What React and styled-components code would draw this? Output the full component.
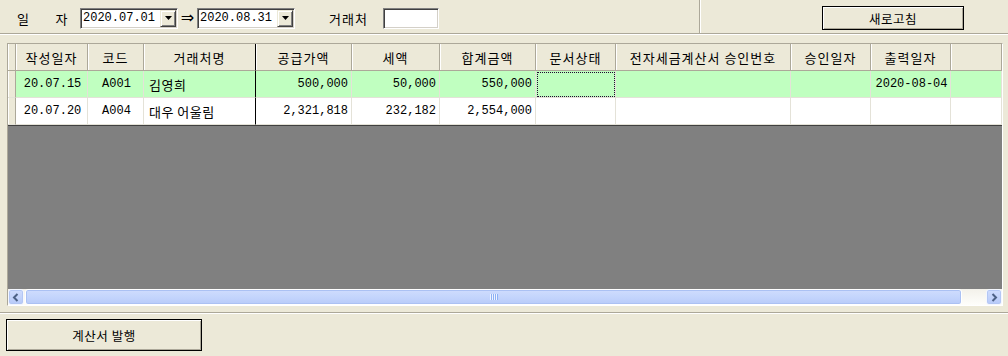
import React from 'react';
import styled, { createGlobalStyle, css } from 'styled-components';

const KO = `"Noto Sans CJK KR", "Noto Sans", sans-serif`;
const MONO = `"Liberation Mono", "DejaVu Sans Mono", "Noto Sans CJK KR", monospace`;

const colors = {
  face: '#ECE9D8',
  shadow: '#ACA899',
  dark: '#404040',
  canvas: '#808080',
  gridLine: '#E4E2D8',
  selected: '#C0FFC0',
};

const GlobalStyle = createGlobalStyle`
  * { box-sizing: border-box; }
  html, body { margin: 0; padding: 0; background: ${colors.face}; }
  body {
    width: 1008px;
    height: 356px;
    overflow: hidden;
    font-family: ${KO};
    font-size: 13px;
    color: #000;
  }
`;

const Page = styled.div`
  display: flex;
  flex-direction: column;
  width: 1008px;
  height: 356px;
`;

const TopBar = styled.div`
  display: flex;
  height: 34px;
  border-bottom: 1px solid ${colors.shadow};
`;

const FilterGroup = styled.div`
  display: flex;
  align-items: center;
  width: 700px;
  padding: 3px 0 0 17px;
  border-right: 1px solid ${colors.shadow};
`;

const ActionGroup = styled.div`
  flex: 1;
  display: flex;
  align-items: center;
  justify-content: flex-end;
  padding: 3px 44px 0 0;
  border-left: 1px solid #fff;
`;

const SpreadLabel = styled.div`
  display: flex;
  justify-content: space-between;
  width: 51px;
  margin-right: 12px;
  letter-spacing: 0.5px;
`;

const Label = styled.span`
  margin: 0 15px 0 ${(p) => p.$gap || 0}px;
  letter-spacing: 1px;
`;

const sunken = css`
  background: #fff;
  border: 1px solid;
  border-color: #808080 #fff #fff #808080;
  box-shadow: inset 1px 1px ${colors.dark}, inset -1px -1px #D4D0C8;
`;

const Combo = styled.div`
  ${sunken};
  display: flex;
  align-items: center;
  width: 98px;
  height: 21px;
  padding: 1px;
`;

const ComboValue = styled.span`
  flex: 1;
  padding-left: 1px;
  font-family: ${MONO};
  font-size: 12px;
  line-height: 17px;
`;

const DropButton = styled.span`
  display: flex;
  align-items: center;
  justify-content: center;
  width: 16px;
  height: 17px;
  background: ${colors.face};
  border: 1px solid;
  border-color: ${colors.face} ${colors.dark} ${colors.dark} ${colors.face};
  box-shadow: inset 1px 1px #fff, inset -1px -1px #808080;
`;

const RangeArrow = styled.span`
  width: 19px;
  text-align: center;
  font-family: "DejaVu Sans", sans-serif;
  font-size: 16px;
  line-height: 16px;
`;

const TextBox = styled.div`
  ${sunken};
  width: 56px;
  height: 21px;
`;

const PushButton = styled.button`
  width: ${(p) => p.$w}px;
  height: ${(p) => p.$h}px;
  padding: 0;
  background: ${colors.face};
  border: 1px solid #000;
  box-shadow: inset 1px 1px #fff, inset -1px -1px ${colors.shadow};
  font-family: ${KO};
  font-size: 12.5px;
  color: #000;
  letter-spacing: 0.5px;
`;

const GridArea = styled.div`
  padding: 8px 5px 6px 7px;
  border-top: 1px solid #fff;
  border-bottom: 1px solid ${colors.shadow};
`;

const GridFrame = styled.div`
  display: flex;
  flex-direction: column;
  height: 263px;
  background: ${colors.canvas};
  border: 1px solid;
  border-color: ${colors.shadow} #fff #fff ${colors.shadow};
`;

const TEMPLATE = '8px 72px 56px 112px 96px 88px 96px 80px 175px 80px 80px 1fr';

const Row = styled.div`
  display: grid;
  grid-template-columns: ${TEMPLATE};
  height: 27px;
  background: ${(p) => p.$bg || '#fff'};
`;

const HeaderCell = styled.div`
  display: flex;
  align-items: center;
  justify-content: center;
  background: ${colors.face};
  border-right: 1px solid ${(p) => (p.$frozen ? '#000' : colors.shadow)};
  border-bottom: 1px solid ${colors.shadow};
  box-shadow: inset 1px 0 #fff;
  letter-spacing: 1px;
  white-space: nowrap;
`;

const Indicator = styled.div`
  background: ${colors.face};
  border-right: 1px solid ${colors.shadow};
  border-bottom: 1px solid ${colors.gridLine};
  box-shadow: inset 1px 0 #fff;
`;

const Cell = styled.div`
  display: flex;
  align-items: center;
  justify-content: ${(p) => ({ left: 'flex-start', right: 'flex-end' }[p.$align] || 'center')};
  padding: 0 3px 0 5px;
  border-right: 1px solid ${(p) => (p.$frozen ? '#000' : colors.gridLine)};
  border-bottom: 1px solid ${colors.gridLine};
  font-family: ${(p) => (p.$mono ? MONO : KO)};
  font-size: ${(p) => (p.$mono ? 12 : 13)}px;
  letter-spacing: ${(p) => (p.$mono ? 0 : 0.5)}px;
  white-space: nowrap;
  ${(p) =>
    p.$focus &&
    css`
      outline: 1px dotted #200830;
      outline-offset: -2px;
    `}
`;

const EmptyArea = styled.div`
  flex: 1;
  border-top: 1px solid ${colors.dark};
`;

const ScrollBar = styled.div`
  display: flex;
  height: 16px;
  background: linear-gradient(180deg, #F3F1EA, #FEFEFB);
`;

const ScrollButton = styled.span`
  display: flex;
  align-items: center;
  justify-content: center;
  width: 16px;
  height: 16px;
  border: 1px solid #F4F7FE;
  border-radius: 3px;
  background: linear-gradient(180deg, #D0DDFD, #B7CAF8);
  box-shadow: inset 0 0 0 1px #B4C7F4;
`;

const Track = styled.div`
  flex: 1;
  display: flex;
  padding: 0 1px;
`;

const Thumb = styled.div`
  position: relative;
  height: 16px;
  border: 1px solid #fff;
  border-radius: 3px;
  background: linear-gradient(180deg, #CFDCFD 0%, #C4D5FC 50%, #B8CBF9 100%);
  box-shadow: inset 0 0 0 1px #ABC1F3;

  &::after {
    content: '';
    position: absolute;
    left: 50%;
    top: 4px;
    width: 8px;
    height: 6px;
    margin-left: -4px;
    background: repeating-linear-gradient(90deg, #EEF3FE 0 1px, #8DB0F5 1px 2px);
  }
`;

const BottomBar = styled.div`
  flex: 1;
  padding: 5px 0 0 6px;
  border-top: 1px solid #fff;
`;

const columns = [
  { key: 'date', title: '작성일자', mono: true },
  { key: 'code', title: '코드', mono: true },
  { key: 'name', title: '거래처명', align: 'left', frozen: true },
  { key: 'supply', title: '공급가액', align: 'right', mono: true },
  { key: 'tax', title: '세액', align: 'right', mono: true },
  { key: 'total', title: '합계금액', align: 'right', mono: true },
  { key: 'status', title: '문서상태' },
  { key: 'approvalNo', title: '전자세금계산서 승인번호' },
  { key: 'approvalDate', title: '승인일자' },
  { key: 'printDate', title: '출력일자', mono: true },
  { key: 'blank', title: '' },
];

const invoices = [
  {
    date: '20.07.15',
    code: 'A001',
    name: '김영희',
    supply: '500,000',
    tax: '50,000',
    total: '550,000',
    printDate: '2020-08-04',
    selected: true,
  },
  {
    date: '20.07.20',
    code: 'A004',
    name: '대우 어울림',
    supply: '2,321,818',
    tax: '232,182',
    total: '2,554,000',
  },
];

const focusCell = { row: 0, key: 'status' };

const DownTriangle = () => (
  <svg width="7" height="4" viewBox="0 0 7 4">
    <polygon points="0,0 7,0 3.5,4" fill="#000" />
  </svg>
);

const Chevron = ({ dir }) => (
  <svg width="8" height="9" viewBox="0 0 8 9">
    <polyline
      points={dir === 'left' ? '5.5,1 2,4.5 5.5,8' : '2.5,1 6,4.5 2.5,8'}
      fill="none"
      stroke="#4D6185"
      strokeWidth="2"
    />
  </svg>
);

function DateCombo({ value }) {
  return (
    <Combo>
      <ComboValue>{value}</ComboValue>
      <DropButton>
        <DownTriangle />
      </DropButton>
    </Combo>
  );
}

export default function App() {
  const thumbRatio = 938 / 961;

  return (
    <Page>
      <GlobalStyle />
      <TopBar>
        <FilterGroup>
          <SpreadLabel>
            <span>일</span>
            <span>자</span>
          </SpreadLabel>
          <DateCombo value="2020.07.01" />
          <RangeArrow>⇒</RangeArrow>
          <DateCombo value="2020.08.31" />
          <Label $gap={34}>거래처</Label>
          <TextBox />
        </FilterGroup>
        <ActionGroup>
          <PushButton $w={142} $h={24}>새로고침</PushButton>
        </ActionGroup>
      </TopBar>

      <GridArea>
        <GridFrame>
          <Row>
            <HeaderCell />
            {columns.map((c) => (
              <HeaderCell key={c.key} $frozen={c.frozen}>
                {c.title}
              </HeaderCell>
            ))}
          </Row>
          {invoices.map((inv, i) => (
            <Row key={inv.code} $bg={inv.selected ? colors.selected : '#fff'}>
              <Indicator />
              {columns.map((c) => (
                <Cell
                  key={c.key}
                  $align={c.align}
                  $mono={c.mono}
                  $frozen={c.frozen}
                  $focus={focusCell.row === i && focusCell.key === c.key}
                >
                  {inv[c.key] || ''}
                </Cell>
              ))}
            </Row>
          ))}
          <EmptyArea />
          <ScrollBar>
            <ScrollButton>
              <Chevron dir="left" />
            </ScrollButton>
            <Track>
              <Thumb style={{ width: `${thumbRatio * 100}%` }} />
            </Track>
            <ScrollButton>
              <Chevron dir="right" />
            </ScrollButton>
          </ScrollBar>
        </GridFrame>
      </GridArea>

      <BottomBar>
        <PushButton $w={196} $h={32}>계산서 발행</PushButton>
      </BottomBar>
    </Page>
  );
}
